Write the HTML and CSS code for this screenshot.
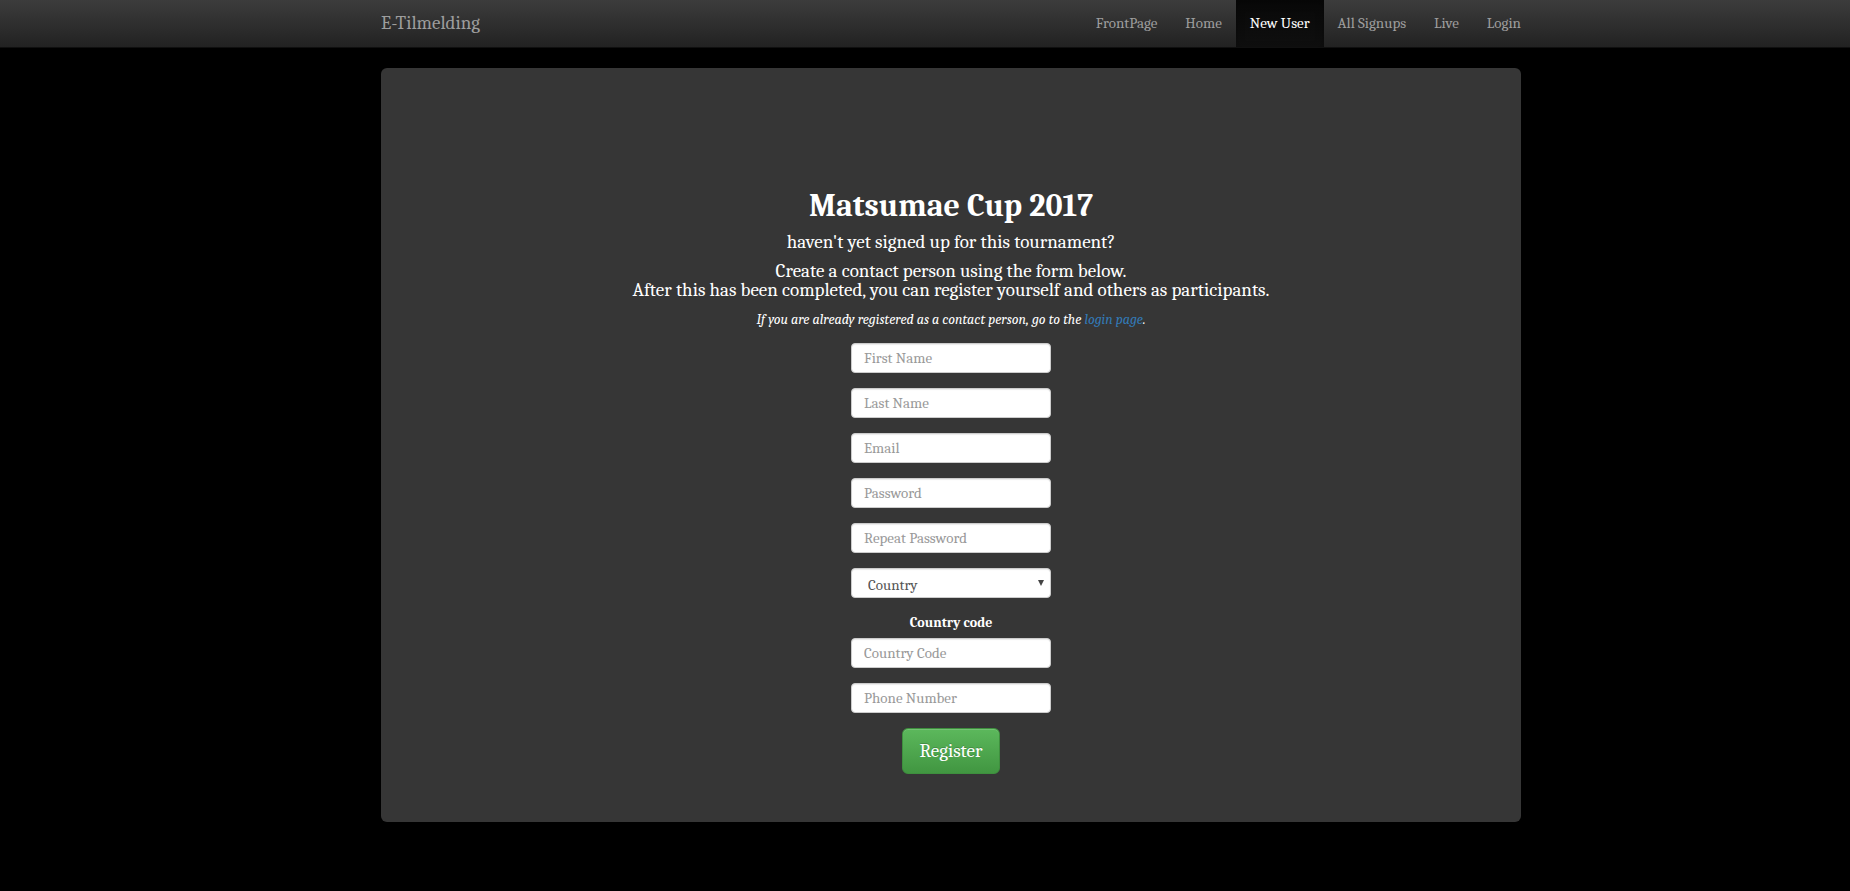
FILE: index.html
```html
<!DOCTYPE html>
<html lang="en">
<head>
<meta charset="utf-8">
<meta name="viewport" content="width=device-width, initial-scale=1">
<title>E-Tilmelding</title>
<link rel="stylesheet" href="styles.css">
</head>
<body>
<header class="navbar page-gutter">
  <div class="container navbar-inner">
    <a class="brand" href="#">E-Tilmelding</a>
    <nav class="nav">
      <a href="#">FrontPage</a>
      <a href="#">Home</a>
      <a class="active" href="#" aria-current="page">New User</a>
      <a href="#">All Signups</a>
      <a href="#">Live</a>
      <a href="#">Login</a>
    </nav>
  </div>
</header>
<div class="page-gutter">
<main class="container panel">
  <h1 class="title">Matsumae Cup 2017</h1>
  <p class="lead">haven't yet signed up for this tournament?</p>
  <p class="lead">Create a contact person using the form below.<br>After this has been completed, you can register yourself and others as participants.</p>
  <p class="note">If you are already registered as a contact person, go to the <a href="#">login page</a>.</p>
  <form class="form">
    <input class="field" type="text" placeholder="First Name" aria-label="First Name">
    <input class="field" type="text" placeholder="Last Name" aria-label="Last Name">
    <input class="field" type="email" placeholder="Email" aria-label="Email">
    <input class="field" type="password" placeholder="Password" aria-label="Password">
    <input class="field" type="password" placeholder="Repeat Password" aria-label="Repeat Password">
    <div class="select-wrap">
      <select class="field select" aria-label="Country"><option>Country</option></select>
      <svg class="arrow" viewBox="0 0 6 6" aria-hidden="true"><path d="M0 0h6L3 6z"/></svg>
    </div>
    <div class="group">
      <label for="code">Country code</label>
      <input class="field" id="code" type="text" placeholder="Country Code">
    </div>
    <input class="field" type="tel" placeholder="Phone Number" aria-label="Phone Number">
    <button class="register" type="button">Register</button>
  </form>
</main>
</div>
</body>
</html>
```
FILE: styles.css
```css
* { box-sizing: border-box; }
body {
  margin: 0;
  background: #000;
  color: #fff;
  font: 14px/20px Cambria, Caladea, "Droid Serif", "Noto Serif", "Liberation Serif", serif;
}
.page-gutter { padding-left: 52px; }
.container { width: 100%; max-width: 1140px; margin: 0 auto; }
.navbar {
  background: linear-gradient(#3c3c3c, #222);
  border-bottom: 1px solid #101010;
}
.navbar-inner { display: flex; justify-content: space-between; }
.brand, .nav a {
  color: #9d9d9d;
  text-decoration: none;
  padding: 13px 0 14px;
}
.brand { font-size: 19px; }
.nav { display: flex; margin-right: -14px; font-size: 15px; }
.nav a { padding: 13px 14px 14px; }
.nav .active {
  color: #fff;
  background: linear-gradient(#080808, #0f0f0f);
  box-shadow: inset 0 3px 9px rgba(0, 0, 0, .25);
}
.panel {
  margin-top: 20px;
  padding: 120px 60px 48px;
  background: #363636;
  border-radius: 6px;
  text-align: center;
}
.title { margin: 0 0 9px; font-size: 32px; line-height: 36px; }
.lead { margin: 0 0 10px; font-size: 19px; line-height: 19px; }
.note { margin: 0 0 13px; font-style: italic; line-height: 20px; }
.note a { color: #337ab7; text-decoration: none; }
.form { display: flex; flex-direction: column; align-items: center; gap: 15px; }
.field {
  display: block;
  width: 200px;
  height: 30px;
  padding: 4px 12px;
  border: 1px solid #ccc;
  border-radius: 4px;
  background: #fff;
  box-shadow: inset 0 1px 1px rgba(0, 0, 0, .08);
  color: #555;
  font: inherit;
  font-size: 15px;
}
.field::placeholder { color: #999; opacity: 1; }
.select-wrap { position: relative; }
.select { appearance: none; padding: 6px 16px 2px; }
.arrow { position: absolute; right: 7px; top: 12px; width: 6px; height: 6px; fill: #444; pointer-events: none; }
.group label { display: block; margin-bottom: 5px; font-weight: bold; }
.register {
  padding: 11px 16px;
  border: 1px solid #3e8f3e;
  border-radius: 6px;
  background: linear-gradient(#5cb85c, #419641);
  color: #fff;
  font: inherit;
  font-size: 19px;
  line-height: 22px;
  box-shadow: inset 0 1px 0 rgba(255, 255, 255, .15);
  text-shadow: 0 -1px 0 rgba(0, 0, 0, .2);
}
```
